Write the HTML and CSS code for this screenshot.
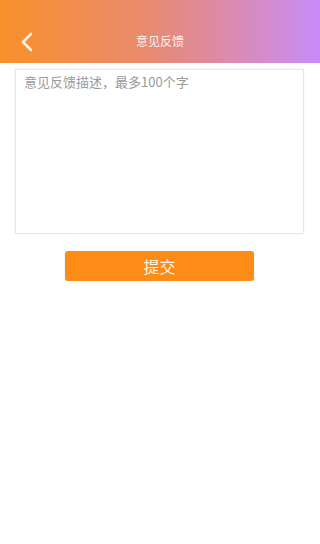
FILE: index.html
```html
<!DOCTYPE html>
<html lang="zh">
<head>
<meta charset="utf-8">
<meta name="viewport" content="width=device-width, initial-scale=1">
<title>意见反馈</title>
<link rel="stylesheet" href="styles.css">
</head>
<body>
<header class="topbar">
  <span class="back">
    <svg width="14" height="20" viewBox="0 0 14 20"><path d="M11 2 L3 10 L11 18" fill="none" stroke="#fff3dc" stroke-width="2.6" stroke-linecap="round" stroke-linejoin="round"/></svg>
  </span>
  <h1 class="title">意见反馈</h1>
  <span class="spacer"></span>
</header>
<main class="content">
  <textarea class="feedback" placeholder="意见反馈描述，最多100个字" maxlength="100"></textarea>
  <button class="submit" type="button">提交</button>
</main>
</body>
</html>
```
FILE: styles.css
```css
html, body {
  margin: 0;
  padding: 0;
  background: #fff;
  font-family: "Noto Sans CJK SC", "Liberation Sans", sans-serif;
}
.topbar {
  box-sizing: border-box;
  height: 63px;
  padding: 20px 0 0 20px;
  display: grid;
  grid-template-columns: 1fr auto 1fr;
  align-items: center;
  background: linear-gradient(90deg, #f8912a 0%, #e98a6e 45%, #d98bb6 75%, #c78cfa 100%);
}
.back {
  display: flex;
  margin-top: 1px;
}
.title {
  margin: 0 0 2px 0;
  transform: translateX(-10px);
  font-size: 12px;
  font-weight: normal;
  color: rgba(255, 255, 255, 0.9);
}
.content {
  display: flex;
  flex-direction: column;
  align-items: center;
  padding: 6px 16px 0 15px;
}
.feedback {
  box-sizing: border-box;
  align-self: stretch;
  height: 165px;
  margin: 0;
  border: 1px solid #e6e6e6;
  box-shadow: 0 0 3px rgba(0, 0, 0, 0.06);
  border-radius: 1px;
  padding: 2px 8px;
  font-family: "Noto Sans CJK SC", sans-serif;
  font-size: 13px;
  line-height: 20px;
  color: #333;
  resize: none;
  outline: none;
}
.feedback::placeholder {
  color: #9a9a9a;
}
.submit {
  margin-top: 17px;
  width: 189px;
  height: 30px;
  border: none;
  border-radius: 3px;
  background: #fd8b18;
  color: #fff6e8;
  font-family: "Noto Sans CJK SC", sans-serif;
  font-size: 16px;
  padding: 0;
  box-shadow: 0 1px 2px rgba(0, 0, 0, 0.12);
}
```
